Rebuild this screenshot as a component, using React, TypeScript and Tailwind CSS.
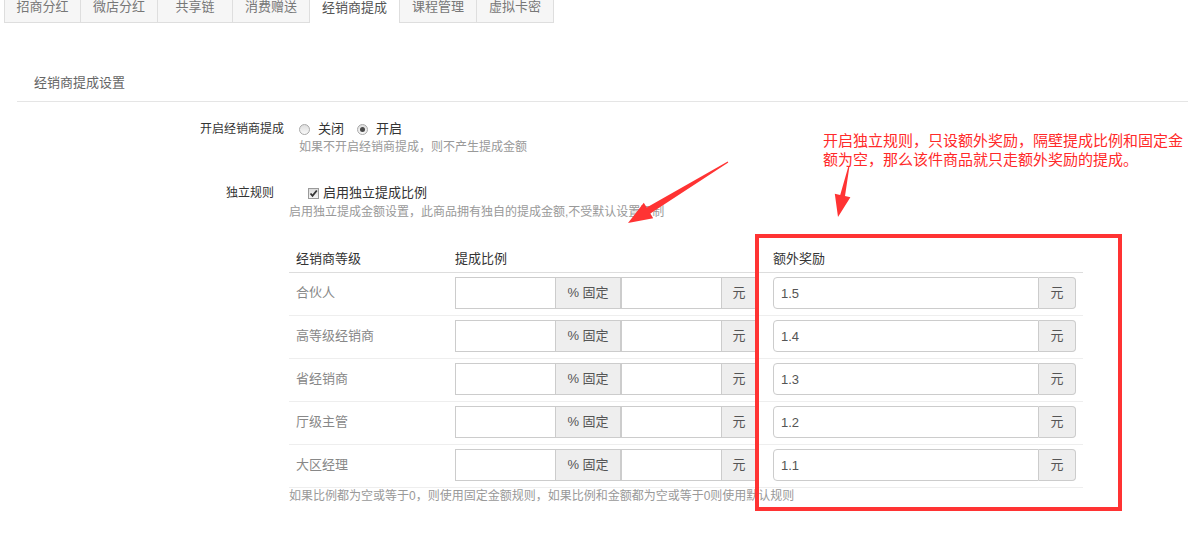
import React from "react";

const tabs: { t: string; w: string; active?: boolean; first?: boolean }[] = [
  { t: "招商分红", w: "w-[77px]", first: true },
  { t: "微店分红", w: "w-[77px]" },
  { t: "共享链", w: "w-[75px]" },
  { t: "消费赠送", w: "w-[77px]" },
  { t: "经销商提成", w: "w-[90px]", active: true },
  { t: "课程管理", w: "w-[77px]" },
  { t: "虚拟卡密", w: "w-[77px]" },
];

const rows = [
  ["合伙人", "1.5"],
  ["高等级经销商", "1.4"],
  ["省经销商", "1.3"],
  ["厅级主管", "1.2"],
  ["大区经理", "1.1"],
];

function Radio({ checked }: { checked?: boolean }) {
  return (
    <span className="w-[11px] h-[11px] rounded-full border border-[#a9a9a9] bg-linear-to-b from-[#dedede] to-[#f9f9f9] flex items-center justify-center">
      {checked && <span className="w-[5px] h-[5px] rounded-full bg-[#4a4a4a]" />}
    </span>
  );
}

function Checkbox() {
  return (
    <span className="w-[11px] h-[11px] border border-[#9a9a9a] bg-linear-to-b from-[#dcdcdc] to-[#f4f4f4] flex items-center justify-center">
      <svg width="9" height="9" viewBox="0 0 9 9">
        <path d="M1.5 4.5 L3.5 6.8 L7.8 1.5" fill="none" stroke="#333" strokeWidth="1.8" />
      </svg>
    </span>
  );
}

export default function App() {
  return (
    <div className="relative w-[1188px] h-[542px] overflow-hidden bg-white font-['Liberation_Sans','Noto_Sans_CJK_SC',sans-serif] text-[#333]">
      {/* tabs */}
      <div className="-mt-[8px] flex pl-[4px]">
        {tabs.map((tab) => (
          <div
            key={tab.t}
            className={`${tab.w} h-[31px] flex items-center justify-center text-[13px] border-r border-[#dedede] ${tab.first ? "border-l" : ""} ${
              tab.active ? "bg-white text-[#555]" : "bg-[#f6f6f6] text-[#777] border-b"
            }`}
          >
            {tab.t}
          </div>
        ))}
      </div>

      {/* section title */}
      <div className="ml-[17px] mt-[50px] pl-[17px] pb-[8px] border-b border-[#e5e5e5] text-[13px] leading-[20px] text-[#666]">
        经销商提成设置
      </div>

      {/* row 1 */}
      <div className="mt-[17px] flex h-[20px] items-center">
        <div className="w-[284px] text-right text-[12px] text-[#333]">开启经销商提成</div>
        <div className="ml-[15px] flex items-center text-[13px] text-[#333]">
          <Radio />
          <span className="ml-[8px]">关闭</span>
          <span className="ml-[13px]">
            <Radio checked />
          </span>
          <span className="ml-[8px]">开启</span>
        </div>
      </div>
      <div className="pl-[299px] text-[12px] leading-[16px] text-[#999]">如果不开启经销商提成，则不产生提成金额</div>

      {/* row 2 */}
      <div className="mt-[28px] flex h-[20px] items-center">
        <div className="w-[274px] text-right text-[12px] text-[#333]">独立规则</div>
        <div className="ml-[34px] flex items-center text-[13px] text-[#333]">
          <Checkbox />
          <span className="ml-[4px]">启用独立提成比例</span>
        </div>
      </div>
      <div className="mt-[1px] pl-[289px] text-[12px] leading-[16px] text-[#999]">
        启用独立提成金额设置，此商品拥有独自的提成金额,不受默认设置限制
      </div>

      {/* table */}
      <div className="mt-[25px] ml-[289px] w-[794px]">
        <div className="grid grid-cols-[159px_318px_317px] pt-[4px] pb-[3px] leading-[20px] text-[13px] text-[#333] border-b border-[#dddddd]">
          <div className="pl-[7px]">经销商等级</div>
          <div className="pl-[7px]">提成比例</div>
          <div className="pl-[7px]">额外奖励</div>
        </div>
        {rows.map(([name, val]) => (
          <div key={name} className="grid grid-cols-[159px_318px_317px] h-[43px] pt-[4px] border-b border-[#eeeeee]">
            <div className="pl-[7px] h-[32px] flex items-center text-[13px] text-[#888]">{name}</div>
            <div className="pl-[7px] flex h-[32px]">
              <input readOnly className="w-[101px] h-[32px] border border-[#ccc] bg-white outline-none" />
              <div className="w-[65px] h-[32px] border border-l-0 border-[#ccc] bg-[#eee] flex items-center justify-center text-[13px] text-[#555]">
                % 固定
              </div>
              <input readOnly className="w-[101px] h-[32px] border border-[#ccc] bg-white outline-none" />
              <div className="w-[35px] h-[32px] border border-l-0 border-[#ccc] bg-[#eee] flex items-center justify-center text-[13px] text-[#555]">
                元
              </div>
            </div>
            <div className="pl-[7px] flex h-[32px]">
              <div className="flex w-[303px]">
                <input
                  readOnly
                  value={val}
                  className="flex-1 min-w-0 h-[32px] border border-[#ccc] rounded-l-[4px] bg-white pl-[7px] text-[13px] text-[#555] outline-none font-['Liberation_Sans',sans-serif]"
                />
                <div className="w-[37px] h-[32px] border border-l-0 border-[#ccc] rounded-r-[4px] bg-[#eee] flex items-center justify-center text-[13px] text-[#555]">
                  元
                </div>
              </div>
            </div>
          </div>
        ))}
        <div className="text-[12px] leading-[17px] text-[#999]">
          如果比例都为空或等于0，则使用固定金额规则，如果比例和金额都为空或等于0则使用默认规则
        </div>
      </div>

      {/* annotation overlay */}
      <div className="absolute left-[755px] top-[234px] w-[367px] h-[277px] border-4 border-[#ff3333] pointer-events-none" />
      <div className="absolute left-[823px] top-[130px] text-[15px] leading-[19px] text-[#ff2a2a] whitespace-nowrap font-['Noto_Sans_CJK_SC',sans-serif]">
        <div>开启独立规则，只设额外奖励，隔壁提成比例和固定金</div>
        <div>额为空，那么该件商品就只走额外奖励的提成。</div>
      </div>
      <svg className="absolute left-0 top-0 pointer-events-none" width="1188" height="542" viewBox="0 0 1188 542">
        <polygon
          points="728.3,162.4 650.3,213.5 653.2,218.2 628,223 643.8,202.8 646.7,207.5 727.7,161.6"
          fill="#ff3333"
        />
        <polygon
          points="849.5,166.1 845.0,196.0 850.4,197.2 838,217 834.8,193.8 840.2,195.0 848.5,165.9"
          fill="#ff3333"
        />
      </svg>
    </div>
  );
}
